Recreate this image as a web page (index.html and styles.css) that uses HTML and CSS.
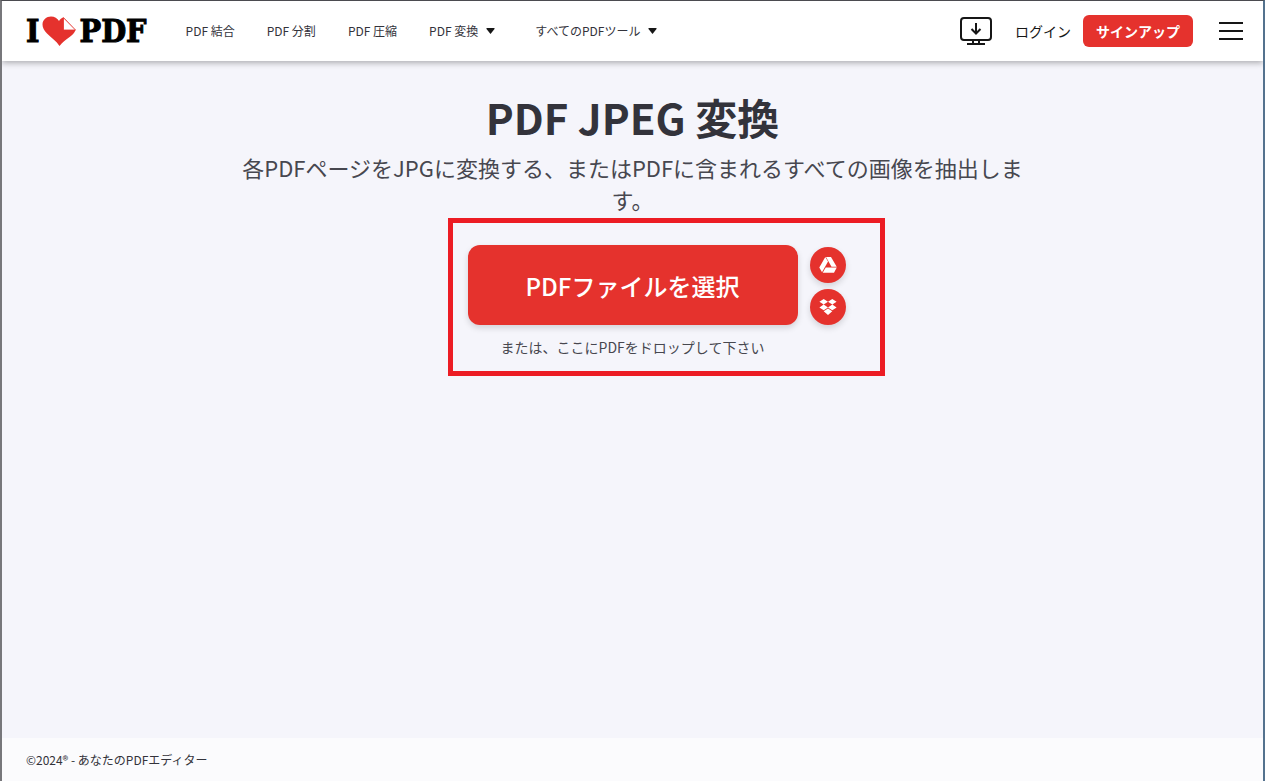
FILE: index.html
```
<!DOCTYPE html>
<html lang="ja">
<head>
    <meta charset="UTF-8">
    <meta name="viewport" content="width=device-width, initial-scale=1.0">
    <title>PDF JPEG 変換</title>
    <link rel="stylesheet" href="styles.css">
</head>
<body>
    <header class="header">
        <a class="logo" href="#" aria-label="I love PDF">
            <span>I</span>
            <svg class="logo-heart" viewBox="0 0 34 30" aria-hidden="true">
                <path fill="#e5322d" d="M17.500 30 C14.500 25 9 21.500 5 17.500 C2 14.500 0.500 11.500 0.500 8.500 C0.500 4 4.500 0.500 9 0.500 C12.500 0.500 15.500 2.300 17 5 C18 3.300 19.500 2 21.500 1.200 L33.500 14 C32 20 23 22.500 17.500 30 Z"/>
                <path fill="#fff" stroke="#e5322d" stroke-width="0.800" d="M21.500 1.800 V14 H33.500 Z"/>
            </svg>
            <span>PDF</span>
        </a>
        <nav class="nav">
            <a href="#">PDF 結合</a>
            <a href="#">PDF 分割</a>
            <a href="#">PDF 圧縮</a>
            <a class="has-menu" href="#">PDF 変換 <svg class="caret" viewBox="0 0 8 6"><path d="M0 0 H8 V1 L4 6 L0 1 Z"/></svg></a>
            <a class="has-menu" href="#">すべてのPDFツール <svg class="caret" viewBox="0 0 8 6"><path d="M0 0 H8 V1 L4 6 L0 1 Z"/></svg></a>
        </nav>
        <div class="actions">
            <a class="desktop" href="#" aria-label="デスクトップ版">
                <svg viewBox="0 0 32 28" fill="none" stroke="#161616" stroke-width="2">
                    <rect x="1" y="1" width="30" height="22" rx="3"/>
                    <path d="M13 23 V27 M19 23 V27 M7 27 H25"/>
                    <path d="M16 6 V16 M11.500 12 L16 16.500 L20.500 12"/>
                </svg>
            </a>
            <a class="login" href="#">ログイン</a>
            <button class="signup" type="button">サインアップ</button>
            <button class="menu" type="button" aria-label="メニュー">
                <svg viewBox="0 0 24 18" stroke="#161616" stroke-width="2"><path d="M0 1 H24 M0 9 H24 M0 17 H24"/></svg>
            </button>
        </div>
    </header>

    <main class="tool">
        <h1>PDF JPEG 変換</h1>
        <p class="subtitle">各PDFページをJPGに変換する、またはPDFに含まれるすべての画像を抽出します。</p>
        <div class="uploader">
            <button class="pick" type="button">PDFファイルを選択</button>
            <div class="sources">
                <button class="source" type="button" aria-label="Google ドライブ">
                    <svg viewBox="0 0 18 16" fill="#fff">
                        <path d="M6.300 0 L9 4.600 L3 15.300 L0.300 10.500 Z"/>
                        <path d="M7 0 H12 L17.700 9.800 H12.500 Z"/>
                        <path d="M6.700 10.500 H17.800 L15 15.800 H3.700 Z"/>
                    </svg>
                </button>
                <button class="source" type="button" aria-label="Dropbox">
                    <svg viewBox="0 0 18 16" fill="#fff">
                        <path d="M4.700 0 L9 2.800 L4.700 5.600 L0.400 2.800 Z M13.300 0 L17.600 2.800 L13.300 5.600 L9 2.800 Z M4.700 5.600 L9 8.400 L4.700 11.200 L0.400 8.400 Z M13.300 5.600 L17.600 8.400 L13.300 11.200 L9 8.400 Z M4.700 12.200 L9 9.400 L13.300 12.200 L9 16 Z"/>
                    </svg>
                </button>
            </div>
            <p class="drop">または、ここにPDFをドロップして下さい</p>
            <div class="highlight"></div>
        </div>
    </main>

    <footer class="footer">©2024® - あなたのPDFエディター</footer>
</body>
</html>
```
FILE: styles.css
```
* {
    box-sizing: border-box;
    margin: 0;
    padding: 0;
}
body {
    font-family: "Noto Sans CJK JP", sans-serif;
    background: #f5f5fb;
    color: #33333b;
    min-height: 100vh;
    display: flex;
    flex-direction: column;
    border: 1px solid #4b4b50;
    border-width: 1px 2px 0;
    border-left-color: #77777b;
    border-right-color: #54728e;
}
a {
    color: inherit;
    text-decoration: none;
}
button {
    font-family: inherit;
    border: none;
    cursor: pointer;
}
svg {
    display: block;
}

/* Header */
.header {
    display: flex;
    align-items: center;
    height: 60px;
    padding: 0 20px 0 24px;
    background: #fff;
    box-shadow: 0 2px 6px rgba(0, 0, 0, 0.3);
}
.logo {
    display: flex;
    align-items: center;
    gap: 3px;
    font-family: "DejaVu Serif Condensed", "DejaVu Serif", serif;
    font-weight: bold;
    font-size: 32px;
    line-height: 40px;
    color: #000;
    -webkit-text-stroke: 1px #000;
}
.logo-heart {
    width: 34px;
    height: 30px;
}
.nav {
    display: flex;
    gap: 32px;
    margin-left: 39px;
    font-size: 12px;
    line-height: 20px;
}
.has-menu {
    display: flex;
    align-items: center;
    gap: 8px;
    padding-right: 8px;
}
.caret {
    width: 9px;
    height: 6px;
    fill: #161616;
}
.actions {
    display: flex;
    align-items: center;
    margin-left: auto;
}
.desktop {
    width: 32px;
    margin-right: 23px;
}
.login {
    font-size: 14px;
    color: #161616;
    margin-right: 12px;
}
.signup {
    width: 110px;
    height: 32px;
    border-radius: 6px;
    background: #e5322d;
    color: #fff;
    font-size: 14px;
    font-weight: bold;
}
.menu {
    width: 24px;
    margin-left: 26px;
    background: none;
}

/* Tool */
.tool {
    flex: 1;
    padding: 28px 20px;
    text-align: center;
}
h1 {
    font-size: 42px;
    line-height: 56px;
    font-weight: 600;
}
.subtitle {
    max-width: 800px;
    margin: 6px auto 0;
    font-size: 22px;
    line-height: 32px;
    color: #47474f;
}
.uploader {
    position: relative;
    display: grid;
    grid-template-columns: 36px 330px 36px;
    column-gap: 12px;
    width: 426px;
    margin: 30px auto 0;
}
.pick {
    grid-column: 2;
    height: 80px;
    border-radius: 12px;
    background: #e5322d;
    color: #fff;
    font-size: 24px;
    font-weight: 500;
    box-shadow: 0 3px 6px rgba(0, 0, 0, 0.14);
}
.sources {
    display: flex;
    flex-direction: column;
    justify-content: flex-end;
    gap: 6px;
}
.source {
    display: flex;
    align-items: center;
    justify-content: center;
    width: 36px;
    height: 36px;
    border-radius: 50%;
    background: #e5322d;
    box-shadow: 0 3px 6px rgba(0, 0, 0, 0.14);
}
.source svg {
    width: 18px;
    height: 16px;
}
.drop {
    grid-column: 2;
    margin-top: 12px;
    font-size: 14px;
    line-height: 20px;
    color: #47474f;
}
.highlight {
    position: absolute;
    inset: -27px -39px -19px 28px;
    border: 5px solid #ec1c24;
    pointer-events: none;
}

/* Footer */
.footer {
    padding: 12px 24px 11px;
    background: #fbfbfd;
    font-size: 12px;
    line-height: 20px;
}
```
